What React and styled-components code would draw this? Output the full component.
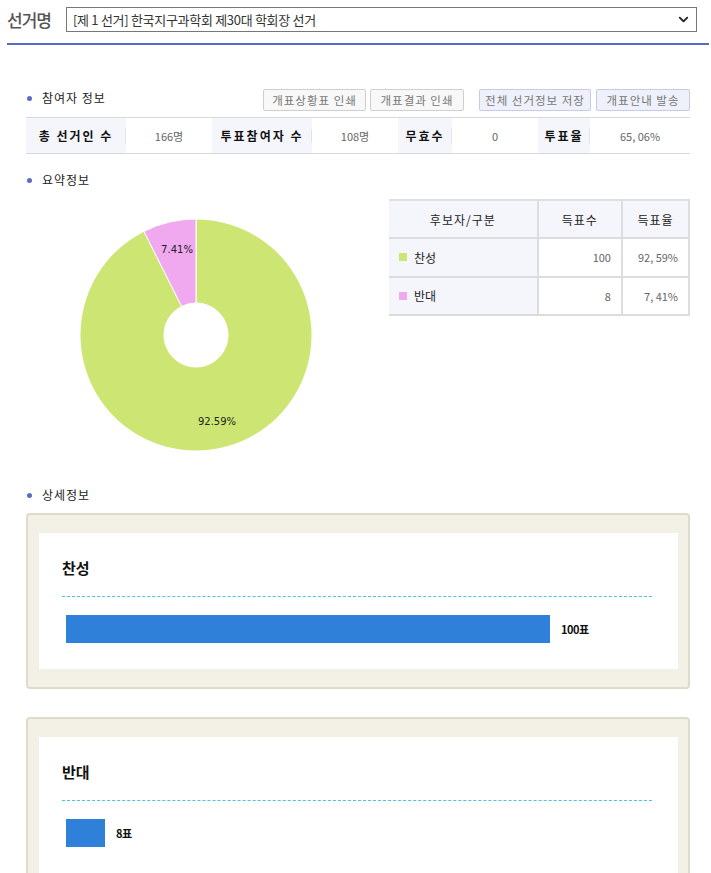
import React from "react";
import styled, { createGlobalStyle } from "styled-components";
import { ChevronDown } from "lucide-react";

const GlobalStyle = createGlobalStyle`
  body {
    margin: 0;
    background: #fff;
    font-family: "Noto Sans CJK KR", "Noto Sans", sans-serif;
    color: #333;
  }
`;

const results = [
  { name: "찬성", votes: 100, rate: "92.59%", rateText: "92, 59%", color: "#cde673" },
  { name: "반대", votes: 8, rate: "7.41%", rateText: "7, 41%", color: "#f0a8ee" },
];

const Page = styled.div`
  width: 711px;
`;

const Header = styled.div`
  display: flex;
  align-items: center;
  margin: 0 2px 0 7px;
  padding: 7px 0 11px;
  border-bottom: 2px solid #5b6cc0;
`;

const HeaderLabel = styled.div`
  width: 59px;
  font-size: 17px;
  font-weight: 500;
  color: #555;
  letter-spacing: -1px;
`;

const SelectBox = styled.div`
  flex: 1;
  height: 23px;
  margin-right: 12px;
  border: 1px solid #777;
  display: flex;
  align-items: center;
  justify-content: space-between;
  padding: 0 5px 0 6px;
  font-size: 13px;
  color: #333;
  letter-spacing: -0.3px;
`;

const Content = styled.div`
  margin: 44px 21px 0 26px;
`;

const SectionHead = styled.div`
  display: flex;
  align-items: center;
  justify-content: space-between;
  height: ${(p) => p.h || 22}px;
`;

const SectionTitle = styled.div`
  display: flex;
  align-items: center;
  font-size: 12px;
  line-height: 14px;
  color: #222;
  letter-spacing: 1px;
  margin-bottom: ${(p) => p.lift || 0}px;

  &::before {
    content: "";
    width: 5px;
    height: 5px;
    border-radius: 50%;
    background: #5a6dc6;
    margin: 0 10px 0 1px;
  }
`;

const ButtonGroup = styled.div`
  display: flex;
`;

const Button = styled.button`
  width: ${(p) => p.w}px;
  height: 22px;
  margin-left: ${(p) => p.gap || 0}px;
  border: 1px solid ${(p) => (p.blue ? "#c9cbe6" : "#cfcfcf")};
  background: ${(p) => (p.blue ? "#eef0fa" : "#f8f8f8")};
  color: #777;
  font-family: inherit;
  font-size: 11.5px;
  letter-spacing: 1px;
  padding: 0;
  border-radius: 2px;
`;

const StatTable = styled.div`
  display: grid;
  grid-template-columns: 100px 86px 100px 86px 54px 86px 52px 100px;
  height: 35px;
  margin-top: 6px;
  border-top: 1px solid #d8d8d8;
  border-bottom: 1px solid #d8d8d8;
`;

const StatHead = styled.div`
  position: relative;
  display: flex;
  align-items: center;
  justify-content: center;
  background: #f5f6fb;
  font-size: 12px;
  font-weight: 700;
  color: #111;
  letter-spacing: 2px;

  &::after {
    content: "";
    position: absolute;
    right: 0;
    top: 11px;
    bottom: 10px;
    width: 1px;
    background: #e3e3e3;
  }
`;

const StatValue = styled.div`
  display: flex;
  align-items: center;
  justify-content: center;
  font-size: 11px;
  color: #666;
`;

const SummaryRow = styled.div`
  display: flex;
`;

const ChartBox = styled.div`
  width: 363px;
  height: 270px;
`;

const ResultTable = styled.table`
  width: 301px;
  border-collapse: collapse;
  border-top: 2px solid #e0e0e2;
  font-size: 12px;
  align-self: flex-start;
`;

const Th = styled.th`
  height: 36px;
  background: #f5f6fb;
  font-weight: 400;
  color: #222;
  letter-spacing: 1px;
  border-right: 2px solid #dedee2;
  border-bottom: 2px solid #dcdcdf;
  width: ${(p) => p.w}px;
  padding: 0;
`;

const Td = styled.td`
  height: 36.5px;
  padding: 0 ${(p) => (p.name ? 0 : 10)}px 0 ${(p) => (p.name ? 10 : 0)}px;
  text-align: ${(p) => (p.name ? "left" : "right")};
  background: ${(p) => (p.name ? "#f5f6fb" : "#fff")};
  color: ${(p) => (p.name ? "#222" : "#666")};
  font-size: ${(p) => (p.name ? 12 : 11)}px;
  border-right: 2px solid #dedee2;
  border-bottom: 2px solid #dcdcdf;
`;

const NameCell = styled.span`
  display: flex;
  align-items: center;
  gap: 7px;
`;

const Swatch = styled.span`
  width: 8px;
  height: 8px;
  background: ${(p) => p.color};
`;

const Card = styled.div`
  margin-top: ${(p) => p.top}px;
  background: #f3f1e5;
  border: 2px solid #dddbcb;
  border-radius: 4px;
  padding: 18px 10px 18px 11px;
`;

const CardInner = styled.div`
  background: #fff;
  padding: 26px 26px 26px 23px;
`;

const CardTitle = styled.div`
  font-size: 15px;
  font-weight: 700;
  color: #111;
  line-height: 18px;
  padding-bottom: 19px;
  border-bottom: 1px dashed #4bc3da;
`;

const BarRow = styled.div`
  display: flex;
  align-items: center;
  margin-top: 18px;
  padding-left: 4px;
`;

const Bar = styled.div`
  height: 28px;
  background: #2f80d9;
`;

const BarLabel = styled.span`
  margin-left: 11px;
  font-size: 11px;
  font-weight: 700;
  color: #111;
  letter-spacing: -0.5px;
`;

const polar = (cx, cy, r, deg) => {
  const a = (deg * Math.PI) / 180;
  return [cx + r * Math.sin(a), cy - r * Math.cos(a)];
};

const slicePath = (cx, cy, R, r, a0, a1) => {
  const large = a1 - a0 > 180 ? 1 : 0;
  const [x0, y0] = polar(cx, cy, R, a0);
  const [x1, y1] = polar(cx, cy, R, a1);
  const [x2, y2] = polar(cx, cy, r, a1);
  const [x3, y3] = polar(cx, cy, r, a0);
  return `M${x0} ${y0} A${R} ${R} 0 ${large} 1 ${x1} ${y1} L${x2} ${y2} A${r} ${r} 0 ${large} 0 ${x3} ${y3} Z`;
};

const Donut = () => {
  const total = results.reduce((s, r) => s + r.votes, 0);
  const cx = 170;
  const cy = 136;
  let start = 0;
  const slices = results.map((r) => {
    const sweep = (r.votes / total) * 360;
    const s = { ...r, a0: start, a1: start + sweep };
    start += sweep;
    return s;
  });
  return (
    <svg width="363" height="270">
      {slices.map((s) => (
        <path
          key={s.name}
          d={slicePath(cx, cy, 116, 32, s.a0, s.a1)}
          fill={s.color}
          stroke="#fff"
          strokeWidth="1"
        />
      ))}
      <text x="151" y="54" fontSize="10" fontFamily="DejaVu Sans" textAnchor="middle" fill="#222">
        7.41%
      </text>
      <text x="191" y="226" fontSize="10" fontFamily="DejaVu Sans" textAnchor="middle" fill="#222">
        92.59%
      </text>
    </svg>
  );
};

const App = () => {
  const max = Math.max(...results.map((r) => r.votes));
  return (
    <Page>
      <GlobalStyle />
      <Header>
        <HeaderLabel>선거명</HeaderLabel>
        <SelectBox>
          <span>[제 1 선거] 한국지구과학회 제30대 학회장 선거</span>
          <ChevronDown size={15} strokeWidth={3} color="#222" />
        </SelectBox>
      </Header>

      <Content>
        {/* 참여자 정보 */}
        <SectionHead>
          <SectionTitle lift={4}>참여자 정보</SectionTitle>
          <ButtonGroup>
            <Button w={103}>개표상황표 인쇄</Button>
            <Button w={94} gap={4}>개표결과 인쇄</Button>
            <Button w={112} gap={15} blue>전체 선거정보 저장</Button>
            <Button w={94} gap={5} blue>개표안내 발송</Button>
          </ButtonGroup>
        </SectionHead>
        <StatTable>
          <StatHead>총 선거인 수</StatHead>
          <StatValue>166명</StatValue>
          <StatHead>투표참여자 수</StatHead>
          <StatValue>108명</StatValue>
          <StatHead>무효수</StatHead>
          <StatValue>0</StatValue>
          <StatHead>투표율</StatHead>
          <StatValue>65, 06%</StatValue>
        </StatTable>

        {/* 요약정보 */}
        <div style={{ height: 17 }} />
        <SectionHead h={18}>
          <SectionTitle>요약정보</SectionTitle>
        </SectionHead>
        <div style={{ height: 10 }} />
        <SummaryRow>
          <ChartBox>
            <Donut />
          </ChartBox>
          <ResultTable>
            <thead>
              <tr>
                <Th w={151}>후보자/구분</Th>
                <Th w={84}>득표수</Th>
                <Th w={66}>득표율</Th>
              </tr>
            </thead>
            <tbody>
              {results.map((r) => (
                <tr key={r.name}>
                  <Td name>
                    <NameCell>
                      <Swatch color={r.color} />
                      {r.name}
                    </NameCell>
                  </Td>
                  <Td>{r.votes}</Td>
                  <Td>{r.rateText}</Td>
                </tr>
              ))}
            </tbody>
          </ResultTable>
        </SummaryRow>

        {/* 상세정보 */}
        <div style={{ height: 17 }} />
        <SectionHead h={18}>
          <SectionTitle>상세정보</SectionTitle>
        </SectionHead>
        {results.map((r, i) => (
          <Card key={r.name} top={i === 0 ? 9 : 28}>
            <CardInner>
              <CardTitle>{r.name}</CardTitle>
              <BarRow>
                <Bar style={{ width: Math.round((484 * r.votes) / max) }} />
                <BarLabel>{r.votes}표</BarLabel>
              </BarRow>
            </CardInner>
          </Card>
        ))}
      </Content>
    </Page>
  );
};

export default App;
